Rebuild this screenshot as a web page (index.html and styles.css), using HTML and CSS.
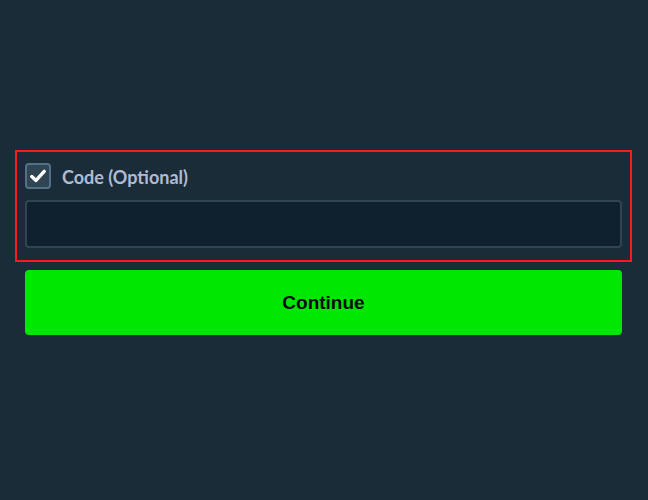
FILE: index.html
```html
<!DOCTYPE html>
<html lang="en">
<head>
    <meta charset="UTF-8">
    <meta name="viewport" content="width=device-width, initial-scale=1.0">
    <title>Code</title>
    <link rel="stylesheet" href="styles.css">
</head>
<body>
    <main class="page">
        <div class="field-box">
            <label class="check-row" for="useCode">
                <span class="checkbox">
                    <svg width="16" height="14" viewBox="0 0 16 14">
                        <path d="M1.8 7.6 L6 11.4 L14.2 2.4" fill="none" stroke="#ffffff" stroke-width="3.4" stroke-linecap="round" stroke-linejoin="round"/>
                    </svg>
                </span>
                <span class="check-label">Code (Optional)</span>
            </label>
            <input type="text" id="useCode" class="code-input">
        </div>
        <div class="actions">
            <button class="continue">Continue</button>
        </div>
    </main>
</body>
</html>
```

FILE: styles.css
```css
body {
    margin: 0;
    background-color: #1a2c38;
    font-family: "Lato", "Open Sans", sans-serif;
}

.page {
    padding-top: 150px;
}

.field-box {
    margin: 0 16px 0 15px;
    border: 2px solid #ff1a1a;
    padding: 11px 8px 12px 8px;
}

.check-row {
    display: flex;
    align-items: center;
    gap: 11px;
    height: 26px;
}

.checkbox {
    box-sizing: border-box;
    width: 26px;
    height: 26px;
    background-color: #2f4553;
    border: 2px solid #557086;
    border-radius: 4px;
    display: flex;
    align-items: center;
    justify-content: center;
}

.check-label {
    color: #b1bad3;
    font-size: 18px;
    font-weight: 700;
    padding-top: 2px;
}

.code-input {
    display: block;
    box-sizing: border-box;
    width: 100%;
    height: 48px;
    margin-top: 11px;
    background-color: #0f212e;
    border: 2px solid #2f4553;
    border-radius: 4px;
    outline: none;
}

.actions {
    padding: 8px 26px 0 25px;
}

.continue {
    display: block;
    width: 100%;
    height: 65px;
    border: none;
    border-radius: 4px;
    background-color: #00e701;
    color: #05080f;
    font-family: "Liberation Sans", Arial, sans-serif;
    font-size: 19px;
    font-weight: 700;
}
```
